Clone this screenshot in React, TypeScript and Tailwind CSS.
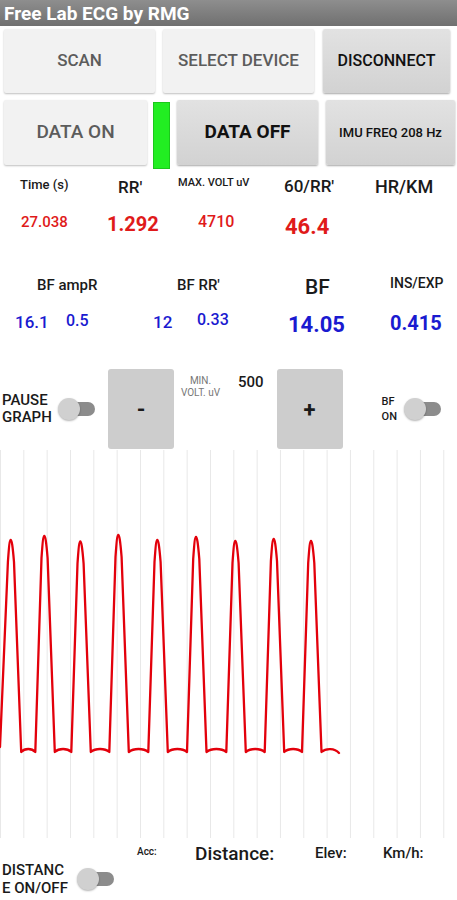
import React from "react";

const PEAKS: [number, number][] = [
  [10.7, 90],
  [44.3, 86],
  [80.3, 91.5],
  [118.3, 85],
  [157.3, 90],
  [196, 87],
  [235.3, 91],
  [273.7, 89],
  [311, 91],
];

const BASE = 302;

function tracePath() {
  let d = "M0,297";
  PEAKS.forEach(([p, py], i) => {
    if (i > 0) d += ` L${p - 9},${BASE}`;
    d += ` L${p - 2.8},${py + 22}`;
    d += ` C${p - 1.6},${py + 5} ${p - 1},${py} ${p},${py}`;
    d += ` C${p + 1},${py} ${p + 1.9},${py + 5} ${p + 3.3},${py + 22}`;
    const end = p + 10.5;
    d += ` L${end},${BASE}`;
    const next = i < PEAKS.length - 1 ? PEAKS[i + 1][0] - 9 : p + 28;
    const w = next - end;
    d += ` C${end + w * 0.25},${BASE - 4} ${end + w * 0.75},${BASE - 4} ${next},${i < PEAKS.length - 1 ? BASE : BASE + 1}`;
  });
  return d;
}

function Toggle() {
  return (
    <div className="relative w-[37px] h-[22px] shrink-0">
      <div className="absolute left-[4px] right-0 top-[4px] h-[14px] rounded-full bg-[#8c8c8c]" />
      <div className="absolute left-0 top-0 w-[22px] h-[22px] rounded-full bg-[#d0d0d0] shadow-[0_1px_2px_rgba(0,0,0,0.3)]" />
    </div>
  );
}

function EcgChart() {
  const lines = Array.from({ length: 20 }, (_, i) => i * 23.33);
  return (
    <svg width="457" height="388" viewBox="0 0 457 388" className="block">
      {lines.map((x, i) => (
        <line key={i} x1={x + 0.5} x2={x + 0.5} y1="0" y2="388" stroke="#e8e8e8" strokeWidth="1" />
      ))}
      <path
        d={tracePath()}
        fill="none"
        stroke="#e3000b"
        strokeWidth="2.3"
        strokeLinejoin="round"
        strokeLinecap="round"
      />
    </svg>
  );
}

export default function App() {
  return (
    <div className="w-[457px] h-[900px] bg-white overflow-hidden font-['Roboto',sans-serif] text-[#1a1a1a]">
      {/* title bar */}
      <div className="h-[26px] bg-gradient-to-b from-[#8e8e8e] to-[#707070] flex items-center pl-[4px]">
        <span className="text-white text-[19px] font-bold leading-none">Free Lab ECG by RMG</span>
      </div>

      {/* buttons row 1 */}
      <div className="flex mt-[3px] h-[64px]">
        <div className="ml-[4px] w-[151px] rounded-[2px] bg-[#f2f2f2] shadow-[0_1px_2px_rgba(0,0,0,0.25)] flex items-center justify-center text-[17px] font-medium text-[#5c5c5c]">
          SCAN
        </div>
        <div className="ml-[8px] w-[151px] rounded-[2px] bg-[#f2f2f2] shadow-[0_1px_2px_rgba(0,0,0,0.25)] flex items-center justify-center text-[17px] font-medium text-[#5c5c5c]">
          SELECT DEVICE
        </div>
        <div className="ml-[9px] w-[127px] rounded-[2px] bg-gradient-to-b from-[#e2e2e2] to-[#d2d2d2] shadow-[0_1px_2px_rgba(0,0,0,0.35)] flex items-center justify-center text-[16px] font-medium text-[#111]">
          DISCONNECT
        </div>
      </div>

      {/* buttons row 2 */}
      <div className="flex items-start mt-[7px]">
        <div className="ml-[4px] w-[143px] h-[65px] rounded-[2px] bg-[#f2f2f2] shadow-[0_1px_2px_rgba(0,0,0,0.25)] flex items-center justify-center text-[19px] font-medium text-[#5c5c5c]">
          DATA ON
        </div>
        <div className="ml-[6px] mt-[2px] w-[17px] h-[67px] bg-[#22ee22] border border-[#1bc81b]" />
        <div className="ml-[7px] w-[141px] h-[65px] rounded-[2px] bg-gradient-to-b from-[#e2e2e2] to-[#d2d2d2] shadow-[0_1px_2px_rgba(0,0,0,0.35)] flex items-center justify-center text-[19px] font-bold text-[#111]">
          DATA OFF
        </div>
        <div className="ml-[8px] w-[129px] h-[65px] rounded-[2px] bg-gradient-to-b from-[#e2e2e2] to-[#d2d2d2] shadow-[0_1px_2px_rgba(0,0,0,0.35)] flex items-center justify-center text-[13px] font-medium text-[#111]">
          IMU FREQ 208 Hz
        </div>
      </div>

      {/* labels row 1 */}
      <div className="flex items-start mt-[6px] h-[22px] font-medium">
        <div className="w-[118px] pl-[20px] mt-[2px] text-[13px] leading-[16px]">Time (s)</div>
        <div className="w-[60px] mt-[2px] text-[17px] leading-[20px]">RR'</div>
        <div className="w-[106px] mt-[1px] text-[11px] leading-[14px]">MAX. VOLT uV</div>
        <div className="w-[91px] mt-[1px] text-[17px] leading-[20px]">60/RR'</div>
        <div className="mt-[2px] text-[18px] leading-[20px]">HR/KM</div>
      </div>

      {/* values row 1 */}
      <div className="flex items-start h-[43px] text-[#e01a1a]">
        <div className="w-[107px] pl-[21px] mt-[17px] text-[15px] leading-[16px] font-medium">27.038</div>
        <div className="w-[91px] mt-[15px] text-[20px] leading-[24px] font-bold">1.292</div>
        <div className="w-[87px] mt-[16px] text-[16px] leading-[18px] font-medium">4710</div>
        <div className="mt-[17px] text-[22px] leading-[26px] font-bold">46.4</div>
      </div>

      {/* labels row 2 */}
      <div className="flex items-start h-[59px] font-medium">
        <div className="w-[177px] pl-[37px] mt-[37px] text-[15px] leading-[16px]">BF ampR</div>
        <div className="w-[128px] mt-[37px] text-[15px] leading-[16px]">BF RR'</div>
        <div className="w-[85px] mt-[35px] text-[21px] leading-[24px]">BF</div>
        <div className="mt-[35px] text-[14px] leading-[16px]">INS/EXP</div>
      </div>

      {/* values row 2 */}
      <div className="flex items-start h-[39px] text-[#1a1ad0]">
        <div className="w-[66px] pl-[15px] mt-[13px] text-[17px] leading-[20px] font-medium">16.1</div>
        <div className="w-[87px] mt-[13px] text-[16px] leading-[18px] font-medium">0.5</div>
        <div className="w-[44px] mt-[13px] text-[17px] leading-[20px] font-medium">12</div>
        <div className="w-[91px] mt-[12px] text-[16px] leading-[18px] font-medium">0.33</div>
        <div className="w-[102px] mt-[13px] text-[22px] leading-[26px] font-bold">14.05</div>
        <div className="mt-[13px] text-[20px] leading-[22px] font-bold">0.415</div>
      </div>

      {/* controls row */}
      <div className="flex items-center mt-[31px] h-[80px]">
        <div className="w-[58px] pl-[2px] text-[15px] leading-[17px] font-medium">
          PAUSE
          <br />
          GRAPH
        </div>
        <Toggle />
        <div className="ml-[13px] w-[66px] h-[80px] rounded-[3px] bg-[#cdcdcd] flex items-center justify-center text-[22px] font-bold">
          -
        </div>
        <div className="self-start ml-[5px] mt-[6px] w-[43px] text-center text-[10px] leading-[12px] text-[#777]">
          MIN.
          <br />
          VOLT. uV
        </div>
        <div className="self-start ml-[16px] mt-[5px] text-[15px] leading-[17px] font-medium">500</div>
        <div className="ml-[13px] w-[66px] h-[80px] rounded-[3px] bg-[#cdcdcd] flex items-center justify-center text-[22px] font-bold">
          +
        </div>
        <div className="ml-[39px] w-[22px] text-[11px] leading-[15px] font-medium">
          BF
          <br />
          ON
        </div>
        <Toggle />
      </div>

      {/* chart */}
      <div className="mt-[1px]">
        <EcgChart />
      </div>

      {/* bottom labels */}
      <div className="flex items-start h-[23px] font-medium">
        <div className="w-[195px] pl-[137px] mt-[8px] text-[10px] leading-[12px]">Acc:</div>
        <div className="w-[120px] mt-[5px] text-[19px] leading-[22px]">Distance:</div>
        <div className="w-[68px] mt-[6px] text-[15px] leading-[18px]">Elev:</div>
        <div className="mt-[6px] text-[15px] leading-[18px]">Km/h:</div>
      </div>

      {/* distance toggle */}
      <div className="flex items-center h-[36px]">
        <div className="w-[77px] pl-[2px] text-[15px] leading-[18px] font-medium">
          DISTANC
          <br />
          E ON/OFF
        </div>
        <Toggle />
      </div>
    </div>
  );
}
